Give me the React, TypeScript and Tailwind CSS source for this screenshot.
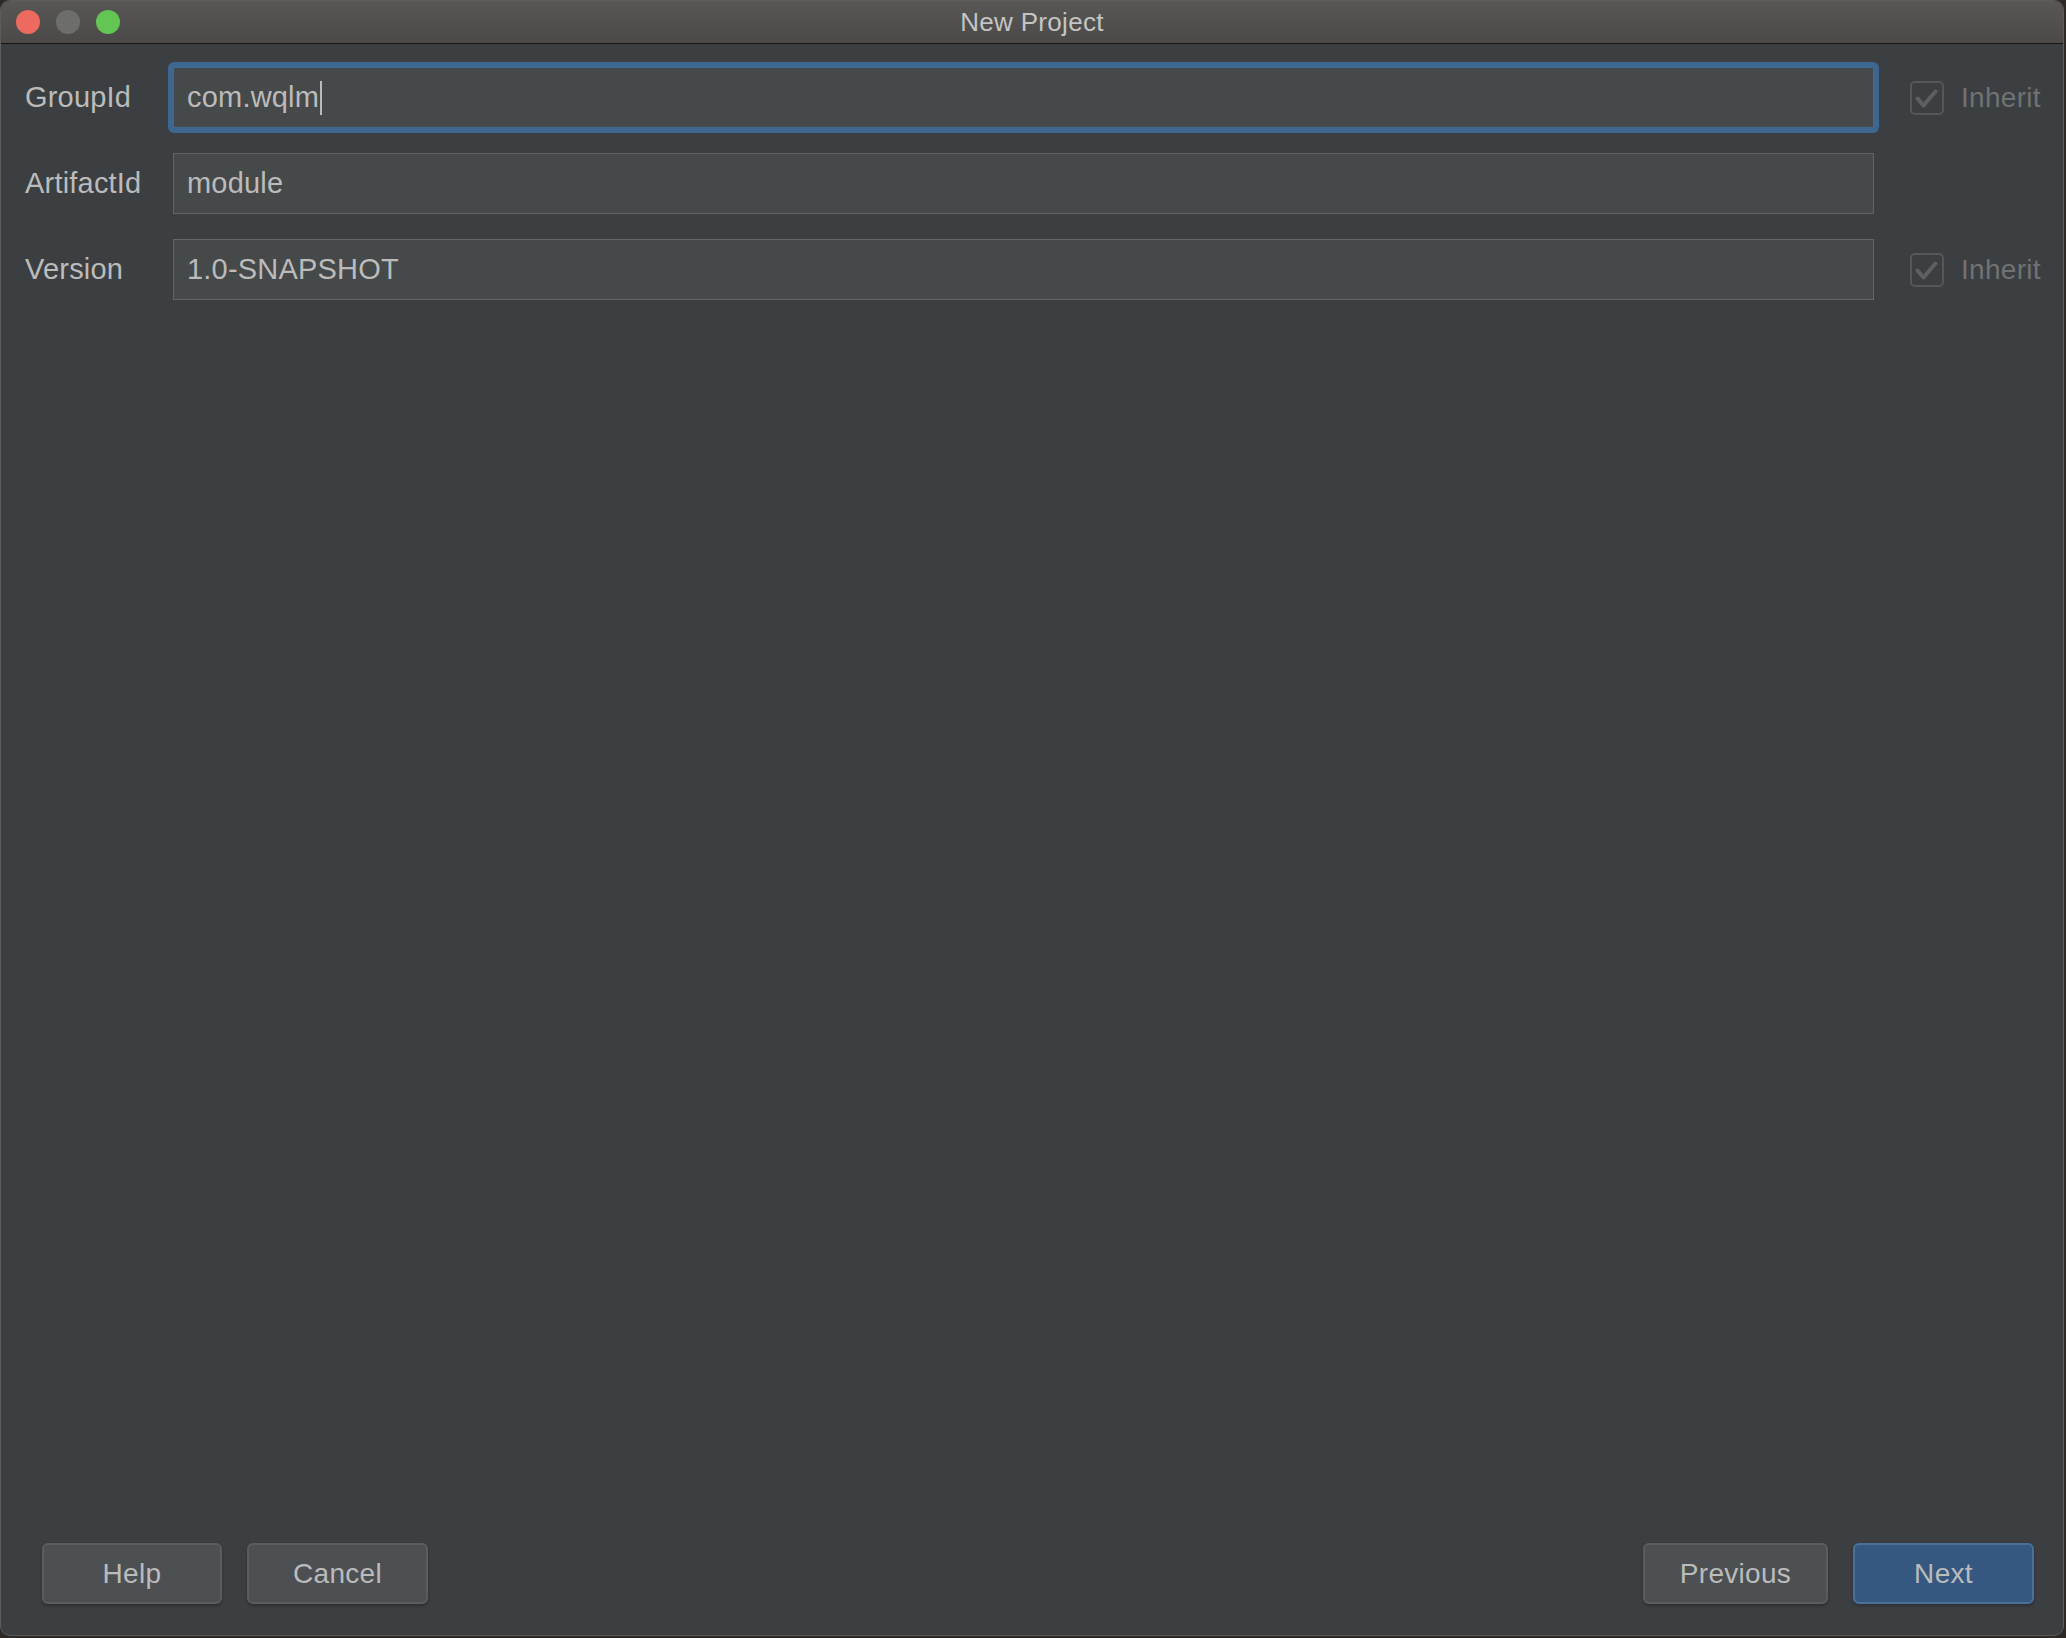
import React from 'react';

const font = { fontFamily: '"Liberation Sans", Arial, sans-serif' };

function Check() {
  return (
    <div className="ml-[31px] flex items-center gap-[17px]">
      <div className="w-[34px] h-[34px] rounded-[5px] border-2 border-[#55585a]">
        <svg viewBox="0 0 30 30" className="w-full h-full">
          <path d="M5.5 15.5 L11.5 22.5 L23.5 8.5" fill="none" stroke="#5d6062" strokeWidth="4" strokeLinecap="round" strokeLinejoin="round" />
        </svg>
      </div>
      <span className="text-[28px] tracking-[0.3px] text-[#707274]">Inherit</span>
    </div>
  );
}

function Row({ label, value, focused, inherit }: { label: string; value: string; focused?: boolean; inherit?: boolean }) {
  return (
    <div className="flex items-center h-[71px]">
      <div className="w-[143px] text-[29px] tracking-[0.2px] text-[#bbbbbb]">{label}</div>
      <div className={`w-[1711px] h-[71px] p-[5px] rounded-[6px] ${focused ? 'bg-[#3d6690]' : ''}`}>
        <div className={`h-full flex items-center pl-[13px] bg-[#45494a] border ${focused ? 'border-[#3f6a96]' : 'border-[#646464]'}`}>
          <span className="text-[29px] tracking-[0.2px] text-[#bbbbbb] leading-none">{value}</span>
          {focused && <span className="ml-[1px] w-[2px] h-[34px] bg-[#bbbbbb]" />}
        </div>
      </div>
      {inherit && <Check />}
    </div>
  );
}

function Btn({ children, w, primary }: { children: React.ReactNode; w: string; primary?: boolean }) {
  return (
    <button
      className={`${w} h-[61px] rounded-[6px] border-2 text-[28px] tracking-[0.3px] text-[#bbbbbb] shadow-[0_2px_3px_rgba(0,0,0,0.25)] ${
        primary ? 'bg-[#365880] border-[#4a7199]' : 'bg-[#4c5052] border-[#5a5d5f]'
      }`}
    >
      {children}
    </button>
  );
}

export default function App() {
  return (
    <div className="w-[2066px] h-[1638px] bg-[#2e2924]" style={font}>
      <div className="w-[2064px] h-[1636px] rounded-[10px] overflow-hidden border border-[#5c5c5c] bg-[#3c3f41] flex flex-col">
        {/* title bar */}
        <div className="relative h-[43px] shrink-0 bg-gradient-to-b from-[#585755] to-[#4b4a48] border-b border-[#151515] flex items-center justify-center">
          <div className="absolute left-[15px] top-[9px] flex gap-[16px]">
            <div className="w-[24px] h-[24px] rounded-full bg-[#ed6a5e]" />
            <div className="w-[24px] h-[24px] rounded-full bg-[#6d6d6c]" />
            <div className="w-[24px] h-[24px] rounded-full bg-[#62c554]" />
          </div>
          <span className="text-[26px] text-[#c4c4c4] tracking-[0.3px]">New Project</span>
        </div>

        <div className="flex-1 flex flex-col pl-[24px] pt-[18px] gap-[15px]">
          <Row label="GroupId" value="com.wqlm" focused inherit />
          <Row label="ArtifactId" value="module" />
          <Row label="Version" value="1.0-SNAPSHOT" inherit />
        </div>

        <div className="flex items-center justify-between pl-[41px] pr-[29px] pb-[31px]">
          <div className="flex gap-[25px]">
            <Btn w="w-[180px]">Help</Btn>
            <Btn w="w-[181px]">Cancel</Btn>
          </div>
          <div className="flex gap-[25px]">
            <Btn w="w-[185px]">Previous</Btn>
            <Btn w="w-[181px]" primary>Next</Btn>
          </div>
        </div>
      </div>
    </div>
  );
}
